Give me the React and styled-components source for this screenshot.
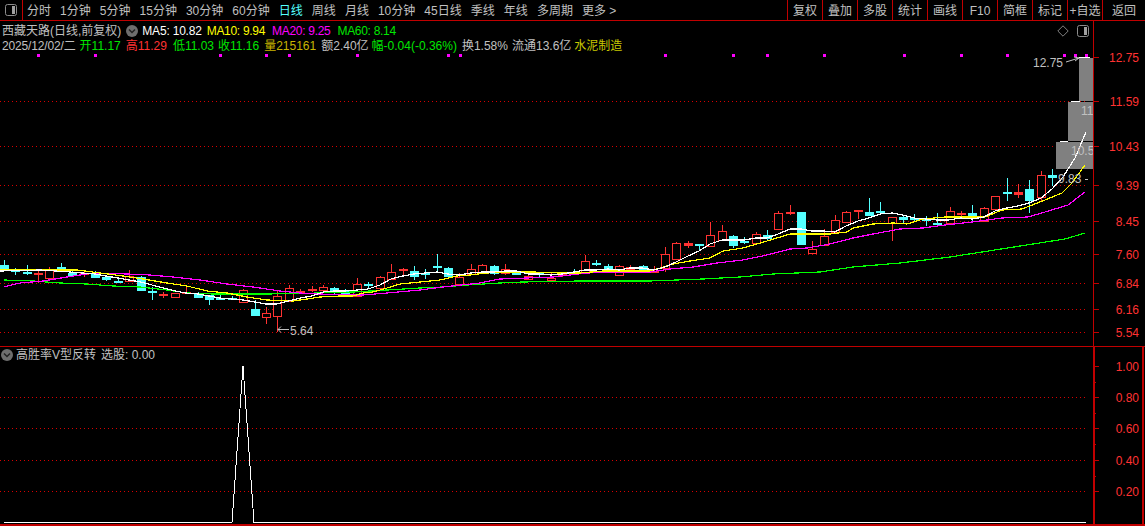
import React from 'react';
import styled, { createGlobalStyle } from 'styled-components';

const RED = '#c00000';
const FONT = '"Liberation Sans", "Noto Sans CJK SC", sans-serif';

const GlobalStyle = createGlobalStyle`
  html, body {
    margin: 0;
    padding: 0;
    background: #000;
    overflow: hidden;
  }
`;

const Screen = styled.div`
  width: 1145px;
  height: 526px;
  background: #000;
  color: #c0c0c0;
  font: 12px/14px ${FONT};
  display: flex;
  flex-direction: column;
  overflow: hidden;
`;

const Toolbar = styled.div`
  height: 20px;
  flex: none;
  display: flex;
  align-items: stretch;
  border-bottom: 1px solid ${RED};
`;

const LayoutCell = styled.div`
  width: 22px;
  display: flex;
  align-items: center;
  justify-content: center;
  border-right: 1px solid ${RED};
`;

const Tabs = styled.div`
  display: flex;
  align-items: center;
  gap: 9.05px;
  padding: 1px 0 0 4px;
`;

const Tab = styled.span`
  color: ${(p) => (p.$active ? '#54ffff' : '#c0c0c0')};
  white-space: nowrap;
`;

const Actions = styled.div`
  margin-left: auto;
  display: flex;
`;

const Action = styled.div`
  width: ${(p) => p.$w || 35}px;
  box-sizing: border-box;
  padding-top: 1px;
  border-left: 1px solid ${RED};
  display: flex;
  align-items: center;
  justify-content: center;
  white-space: nowrap;
`;

const PricePanel = styled.div`
  height: 325px;
  flex: none;
  display: flex;
  border-bottom: 1px solid ${RED};
`;

const Plot = styled.div`
  width: 1093px;
  flex: none;
  display: flex;
  flex-direction: column;
  border-right: 1px solid ${RED};
`;

const InfoBar = styled.div`
  height: 29px;
  flex: none;
  padding: 2px 0 0 2px;
  box-sizing: border-box;
  position: relative;
`;

const InfoRow = styled.div`
  height: 14px;
  padding-top: 1px;
  display: flex;
  align-items: center;
  white-space: nowrap;
`;

const Val = styled.span`
  color: ${(p) => p.$c || '#c0c0c0'};
  margin-left: ${(p) => p.$ml || 0}px;
  letter-spacing: ${(p) => p.$ls || 0}px;
`;

const CornerIcons = styled.div`
  position: absolute;
  right: 3px;
  top: 3px;
  display: flex;
  gap: 7px;
  align-items: center;
`;

const ChartSvg = styled.svg`
  display: block;
  flex: none;
  text {
    font: 12px ${FONT};
  }
`;

const IndicatorPanel = styled.div`
  flex: 1;
  display: flex;
  min-height: 0;
  border-bottom: 2px solid ${RED};
`;

const IndicatorPlot = styled.div`
  width: 1093px;
  flex: none;
  display: flex;
  flex-direction: column;
`;

const IndicatorHead = styled.div`
  height: 16px;
  flex: none;
  padding-left: 1px;
  display: flex;
  align-items: center;
  white-space: nowrap;
`;

const IndicatorAxis = styled.div`
  width: 51px;
  flex: none;
  box-sizing: border-box;
  border-left: 2px solid ${RED};
  border-right: 2px solid ${RED};
`;

const ToggleIcon = () => (
  <svg width="14" height="14" viewBox="0 0 14 14">
    <rect x="1.5" y="1.5" width="11" height="11" rx="2" fill="none" stroke="#8c8c8c" strokeWidth="1" />
    <rect x="8" y="3" width="3" height="8" fill="#a0a0a0" />
  </svg>
);

const FoldIcon = ({ style }) => (
  <svg width="12" height="12" viewBox="0 0 12 12" style={style}>
    <circle cx="6" cy="6" r="6" fill="#6e6e6e" />
    <path d="M3 4.5 L6 7.5 L9 4.5" fill="none" stroke="#222" strokeWidth="1.5" />
  </svg>
);

const DiamondIcon = () => (
  <svg width="12" height="12" viewBox="0 0 12 12">
    <path d="M6 .8 L11.2 6 L6 11.2 L.8 6 Z" fill="none" stroke="#808080" />
  </svg>
);

const tabs = ['分时', '1分钟', '5分钟', '15分钟', '30分钟', '60分钟', '日线', '周线', '月线', '10分钟', '45日线', '季线', '年线', '多周期', '更多 >'];
const actions = ['复权', '叠加', '多股', '统计', '画线', 'F10', '简框', '标记', '+自选'];

// x, high, top, bottom, low, kind (r hollow red, d red doji, c cyan)
const candles = [
  [4, 260, 265, 270, 271, 'c'], [15, 268, 270, 272, 275, 'c'], [27, 265, 272, 274, 275, 'c'],
  [38, 270, 273, 275, 283, 'd'], [49, 267, 269, 278, 278, 'r'], [61, 263, 267, 269, 270, 'c'],
  [72, 269, 273, 276, 276, 'c'], [84, 271, 273, 275, 277, 'd'], [95, 271, 274, 278, 278, 'c'],
  [106, 276, 277, 280, 281, 'c'], [118, 278, 281, 282, 283, 'c'], [129, 270, 276, 281, 282, 'r'],
  [141, 276, 277, 291, 291, 'c'], [152, 287, 291, 293, 300, 'c'], [163, 292, 294, 296, 298, 'd'],
  [175, 293, 293, 297, 297, 'r'], [186, 287, 292, 293, 293, 'd'], [198, 292, 294, 298, 298, 'c'],
  [209, 295, 295, 300, 305, 'c'], [220, 295, 298, 299, 300, 'c'], [232, 296, 298, 300, 300, 'c'],
  [243, 289, 290, 302, 302, 'r'], [255, 300, 309, 316, 316, 'c'], [266, 307, 313, 317, 324, 'r'],
  [277, 290, 296, 316, 332, 'r'], [289, 285, 288, 301, 301, 'r'], [300, 289, 291, 293, 294, 'd'],
  [312, 286, 289, 291, 292, 'd'], [323, 285, 287, 290, 290, 'r'], [334, 287, 288, 292, 295, 'c'],
  [345, 289, 291, 294, 295, 'c'], [357, 278, 284, 296, 296, 'r'], [368, 282, 284, 286, 288, 'c'],
  [380, 276, 277, 288, 289, 'r'], [391, 264, 272, 279, 280, 'r'], [403, 268, 269, 271, 276, 'd'],
  [414, 266, 271, 277, 280, 'c'], [425, 269, 273, 275, 279, 'c'], [437, 254, 266, 268, 273, 'c'],
  [448, 267, 268, 277, 277, 'c'], [459, 273, 277, 284, 284, 'r'], [471, 264, 269, 274, 274, 'r'],
  [482, 264, 265, 273, 273, 'r'], [494, 265, 266, 274, 275, 'c'], [505, 264, 269, 273, 275, 'r'],
  [516, 270, 271, 275, 275, 'c'], [528, 273, 276, 279, 280, 'r'], [539, 273, 273, 275, 277, 'c'],
  [551, 273, 278, 280, 280, 'r'], [562, 273, 274, 275, 277, 'd'], [574, 269, 272, 274, 274, 'c'],
  [585, 255, 261, 272, 272, 'r'], [596, 260, 263, 265, 266, 'c'], [608, 264, 266, 272, 273, 'c'],
  [619, 265, 266, 275, 275, 'r'], [630, 265, 267, 270, 270, 'd'], [643, 265, 266, 271, 272, 'c'],
  [654, 266, 271, 272, 272, 'd'], [665, 247, 254, 268, 272, 'r'], [676, 242, 243, 259, 259, 'r'],
  [688, 241, 243, 246, 248, 'd'], [699, 244, 244, 245, 251, 'c'], [710, 222, 235, 246, 246, 'r'],
  [722, 225, 231, 240, 240, 'r'], [733, 235, 236, 246, 248, 'c'], [744, 237, 241, 242, 244, 'c'],
  [756, 232, 234, 243, 243, 'r'], [767, 230, 235, 239, 240, 'c'], [778, 211, 213, 229, 229, 'r'],
  [790, 205, 212, 214, 215, 'd'], [801, 212, 212, 245, 245, 'c'], [812, 241, 249, 253, 253, 'r'],
  [824, 229, 236, 245, 245, 'r'], [835, 215, 220, 232, 232, 'r'], [846, 211, 212, 222, 222, 'r'],
  [858, 210, 210, 212, 219, 'd'], [869, 198, 212, 216, 216, 'c'], [880, 202, 211, 212, 214, 'c'],
  [892, 217, 217, 223, 241, 'r'], [903, 215, 217, 220, 224, 'c'], [914, 214, 218, 220, 221, 'c'],
  [926, 216, 219, 221, 226, 'c'], [937, 213, 223, 224, 226, 'c'], [950, 207, 211, 223, 224, 'r'],
  [961, 211, 213, 215, 216, 'd'], [972, 205, 213, 219, 221, 'c'], [984, 207, 208, 221, 221, 'r'],
  [995, 196, 196, 209, 209, 'r'], [1007, 178, 192, 193, 201, 'c'], [1018, 184, 192, 195, 198, 'd'],
  [1029, 180, 189, 201, 213, 'c'], [1041, 171, 175, 197, 201, 'r'], [1052, 169, 175, 178, 186, 'c'],
];

const ma5 = '0,271 40,270 70,272 95,274 106,276 118,278 129,280 141,282 152,285 163,288 175,291 186,293 198,294 209,296 220,298 232,299 243,300 255,302 266,304 277,304 289,301 300,298 312,296 323,292 334,291 345,291 357,290 368,289 380,285 391,279 403,276 414,274 425,273 437,272 448,274 459,275 471,273 482,272 494,272 505,271 516,271 528,274 539,274 551,275 562,274 574,272 585,270 596,270 608,269 619,270 630,268 642,268 654,270 665,267 676,262 688,256 699,251 710,244 722,240 733,240 744,240 756,238 767,238 778,234 790,229 801,229 812,231 824,231 835,232 846,226 858,221 869,218 880,214 892,213 903,215 914,218 926,219 937,220 948,220 961,218 972,219 984,217 995,211 1007,208 1018,206 1029,203 1041,198 1052,189 1063,177 1075,158 1086,132';
const ma10 = '0,270 50,270 77,270 100,273 123,276 143,279 167,283 187,286 207,291 227,293 247,297 267,300 293,301 307,299 320,297 340,296 353,296 363,293 373,292 387,288 400,284 420,282 440,280 457,276 470,275 487,273 507,272 533,272 560,273 580,273 603,271 650,271 660,268 673,264 690,261 710,258 723,251 743,248 767,241 790,234 830,234 847,232 853,228 873,224 893,223 907,224 923,219 945,217 965,217 985,217 1002,210 1022,209 1045,200 1062,193 1072,183 1085,165';
const ma20 = '4,287 20,283 43,281 67,277 93,273 127,274 150,275 173,277 200,280 227,284 253,287 280,291 300,293 320,294 345,295 363,295 387,293 420,290 443,287 480,283 500,279 527,278 553,277 587,273 620,272 650,272 670,269 693,267 717,263 743,260 767,255 790,249 807,248 830,244 853,238 873,234 900,229 923,228 945,225 972,222 1002,218 1028,217 1045,212 1068,205 1085,192';
const ma60 = '4,280 33,281 60,283 87,284 113,286 140,287 167,290 187,293 213,294 267,294 320,293 353,292 387,290 420,288 443,287 467,285 500,283 523,282 580,281 650,281 703,279 740,277 773,274 820,272 853,267 900,263 950,257 1065,239 1085,233';

const signalDots = [37, 94, 219, 265, 288, 356, 447, 459, 664, 732, 766, 823, 903, 960, 1006, 1063, 1074, 1085];
const priceLevels = [
  ['12.75', 57.5], ['11.59', 101], ['10.43', 146.5], ['9.39', 185], ['8.45', 221.5],
  ['7.60', 254], ['6.84', 283.5], ['6.16', 309.5], ['5.54', 332.5],
];
const indicatorLevels = [['1.00', 366], ['0.80', 397], ['0.60', 428], ['0.40', 460], ['0.20', 491]];

const Candle = ({ c }) => {
  const [x, high, top, bottom, low, kind] = c;
  const color = kind === 'c' ? '#54ffff' : '#ff3232';
  const left = x - 4;
  return (
    <g shapeRendering="crispEdges">
      <line x1={x + 0.5} x2={x + 0.5} y1={high} y2={low} stroke={color} />
      {kind === 'r' ? (
        <rect x={left + 0.5} y={top + 0.5} width={8} height={bottom - top} fill="#000" stroke={color} />
      ) : (
        <rect x={left} y={top} width={9} height={Math.max(bottom - top, 2)} fill={color} />
      )}
    </g>
  );
};

// one pixel on, three off, laid down by a pattern so every dot stays a whole pixel
const DotPattern = ({ id }) => (
  <defs>
    <pattern id={id} width="4" height="1" patternUnits="userSpaceOnUse">
      <rect width="1" height="1" fill="#d80000" />
    </pattern>
  </defs>
);

const DottedLine = ({ y, fill }) => (
  <rect x={0} y={y} width={1087} height={1} fill={`url(#${fill})`} shapeRendering="crispEdges" />
);

const MaLine = ({ points, color }) => (
  <polyline points={points} fill="none" stroke={color} strokeWidth="1.2" shapeRendering="crispEdges" />
);

const PriceChart = () => (
  <ChartSvg width="1093" height="296" viewBox="0 50 1093 296">
    <DotPattern id="priceDots" />
    {priceLevels.slice(1).map(([, y]) => <DottedLine key={y} y={Math.floor(y)} fill="priceDots" />)}
    {signalDots.map((x) => <rect key={x} x={x} y={54} width={3} height={3} fill="#ff00ff" />)}
    <rect x={1079} y={58} width={14} height={43} fill="#808080" />
    <rect x={1068} y={102} width={25} height={39} fill="#808080" />
    <rect x={1056} y={142} width={37} height={27} fill="#808080" />
    <rect x={1079} y={57} width={11} height={1} fill="#fff" />
    <rect x={1071} y={101} width={9} height={1} fill="#fff" />
    <rect x={1060} y={141} width={8} height={1} fill="#fff" />
    {candles.map((c) => <Candle key={c[0]} c={c} />)}
    <MaLine points={ma60} color="#00ff00" />
    <MaLine points={ma20} color="#ff00ff" />
    <MaLine points={ma10} color="#ffff00" />
    <MaLine points={ma5} color="#ffffff" />
    <text x={1033} y={67} fill="#c0c0c0">12.75</text>
    <path d="M1066 62 L1079 58 M1074 57 L1079 58 L1075 61" fill="none" stroke="#c0c0c0" />
    <text x={1081} y={115} fill="#c0c0c0">11</text>
    <text x={1071} y={155} fill="#c0c0c0">10.5</text>
    <text x={1058} y={183} fill="#c0c0c0">9.83</text>
    <rect x={1085} y={179} width={3} height={1} fill="#c0c0c0" />
    <path d="M278 329.5 L289 329.5 M281 326.5 L278 329.5 L281 332.5" fill="none" stroke="#c0c0c0" />
    <text x={290} y={335} fill="#c0c0c0">5.64</text>
  </ChartSvg>
);

const PriceAxis = () => (
  <ChartSvg width="51" height="325" viewBox="1094 21 51 325">
    {priceLevels.map(([label, y]) => (
      <g key={label}>
        <rect x={1094} y={Math.floor(y)} width={5} height={1} fill={RED} />
        <text x={1139} y={y + 4.5} fill="#ff3232" textAnchor="end">{label}</text>
      </g>
    ))}
  </ChartSvg>
);

const IndicatorChart = () => (
  <ChartSvg width="1093" height="161" viewBox="0 363 1093 161">
    <DotPattern id="signalDots" />
    {indicatorLevels.slice(1).map(([, y]) => <DottedLine key={y} y={y} fill="signalDots" />)}
    <polyline points="4,522.5 232,522.5 243,366 254,522.5 1086,522.5" fill="none" stroke="#fff" shapeRendering="crispEdges" />
  </ChartSvg>
);

const IndicatorScale = () => (
  <ChartSvg width="47" height="177" viewBox="1095 347 47 177">
    {indicatorLevels.map(([label, y]) => (
      <g key={label}>
        <rect x={1095} y={y} width={4} height={1} fill={RED} />
        <rect x={1095} y={y + 16} width={1} height={1} fill={label === '0.20' ? 'none' : RED} />
        <text x={1139} y={y + 4.5} fill="#ff3232" textAnchor="end">{label}</text>
      </g>
    ))}
  </ChartSvg>
);

export default function App() {
  return (
    <Screen>
      <GlobalStyle />
      <Toolbar>
        <LayoutCell><ToggleIcon /></LayoutCell>
        <Tabs>
          {tabs.map((t) => <Tab key={t} $active={t === '日线'}>{t}</Tab>)}
        </Tabs>
        <Actions>
          {actions.map((a) => <Action key={a}>{a}</Action>)}
          <Action $w={43}>返回</Action>
        </Actions>
      </Toolbar>
      <PricePanel>
        <Plot>
          <InfoBar>
            <InfoRow>
              西藏天路(日线,前复权)
              <FoldIcon style={{ marginLeft: 5 }} />
              <Val $c="#fff" $ml={4} $ls={-0.2}>MA5: 10.82</Val>
              <Val $c="#ffff00" $ml={5} $ls={-0.3}>MA10: 9.94</Val>
              <Val $c="#ff00ff" $ml={7} $ls={-0.3}>MA20: 9.25</Val>
              <Val $c="#00e600" $ml={7} $ls={-0.3}>MA60: 8.14</Val>
            </InfoRow>
            <InfoRow>
              <Val $ls={-0.15}>2025/12/02/二</Val>
              <Val $c="#00e600" $ml={4}>开11.17</Val>
              <Val $c="#ff3232" $ml={5}>高11.29</Val>
              <Val $c="#00e600" $ml={6}>低11.03</Val>
              <Val $c="#00e600" $ml={4}>收11.16</Val>
              <Val $c="#c8b400" $ml={5}>量215161</Val>
              <Val $ml={5}>额2.40亿</Val>
              <Val $c="#00e600" $ml={3}>幅-0.04(-0.36%)</Val>
              <Val $ml={5}>换1.58%</Val>
              <Val $ml={4}>流通13.6亿</Val>
              <Val $c="#c8c800" $ml={3}>水泥制造</Val>
            </InfoRow>
            <CornerIcons>
              <DiamondIcon />
              <ToggleIcon />
            </CornerIcons>
          </InfoBar>
          <PriceChart />
        </Plot>
        <PriceAxis />
      </PricePanel>
      <IndicatorPanel>
        <IndicatorPlot>
          <IndicatorHead>
            <FoldIcon />
            <Val $ml={3}>高胜率V型反转</Val>
            <Val $ml={5}>选股: 0.00</Val>
          </IndicatorHead>
          <IndicatorChart />
        </IndicatorPlot>
        <IndicatorAxis><IndicatorScale /></IndicatorAxis>
      </IndicatorPanel>
    </Screen>
  );
}
